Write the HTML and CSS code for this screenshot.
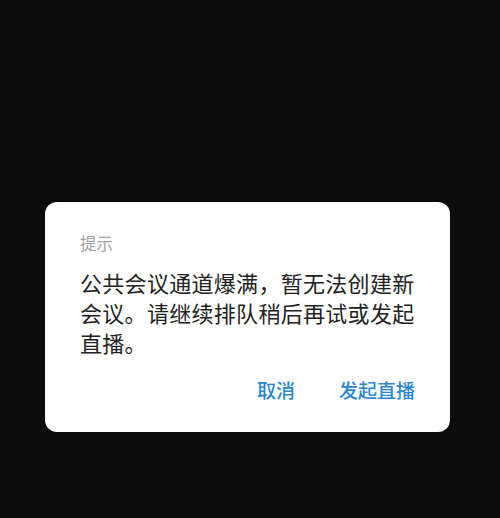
FILE: index.html
```html
<!DOCTYPE html>
<html lang="zh-CN">
<head>
    <meta charset="UTF-8">
    <meta name="viewport" content="width=device-width, initial-scale=1.0">
    <title>提示</title>
    <link rel="stylesheet" href="styles.css">
</head>
<body>
    <div class="dialog">
        <div class="dialog-title">提示</div>
        <p class="dialog-message">公共会议通道爆满，暂无法创建新会议。请继续排队稍后再试或发起直播。</p>
        <div class="dialog-actions">
            <button class="action-btn">取消</button>
            <button class="action-btn">发起直播</button>
        </div>
    </div>
</body>
</html>
```

FILE: styles.css
```css
body {
    margin: 0;
    height: 518px;
    background-color: #0b0b0b;
    font-family: "Noto Sans CJK SC", "Noto Sans", sans-serif;
    display: flex;
    justify-content: center;
    align-items: flex-start;
    padding-top: 202px;
    box-sizing: border-box;
}
.dialog {
    width: 405px;
    margin-left: -5px;
    background-color: #fff;
    border-radius: 12px;
    padding: 30px 35px 30px;
    box-sizing: border-box;
}
.dialog-title {
    font-size: 16.5px;
    line-height: 22px;
    color: #a3a3a3;
}
.dialog-message {
    margin: 13px 0 0;
    font-size: 22px;
    line-height: 30px;
    letter-spacing: 0.3px;
    color: #222;
}
.dialog-actions {
    display: flex;
    justify-content: flex-end;
    gap: 44px;
    margin-top: 21px;
}
.action-btn {
    padding: 0;
    border: none;
    background: none;
    font-family: inherit;
    font-size: 19px;
    line-height: 24px;
    font-weight: 500;
    color: #2a86d3;
    cursor: pointer;
}
```
